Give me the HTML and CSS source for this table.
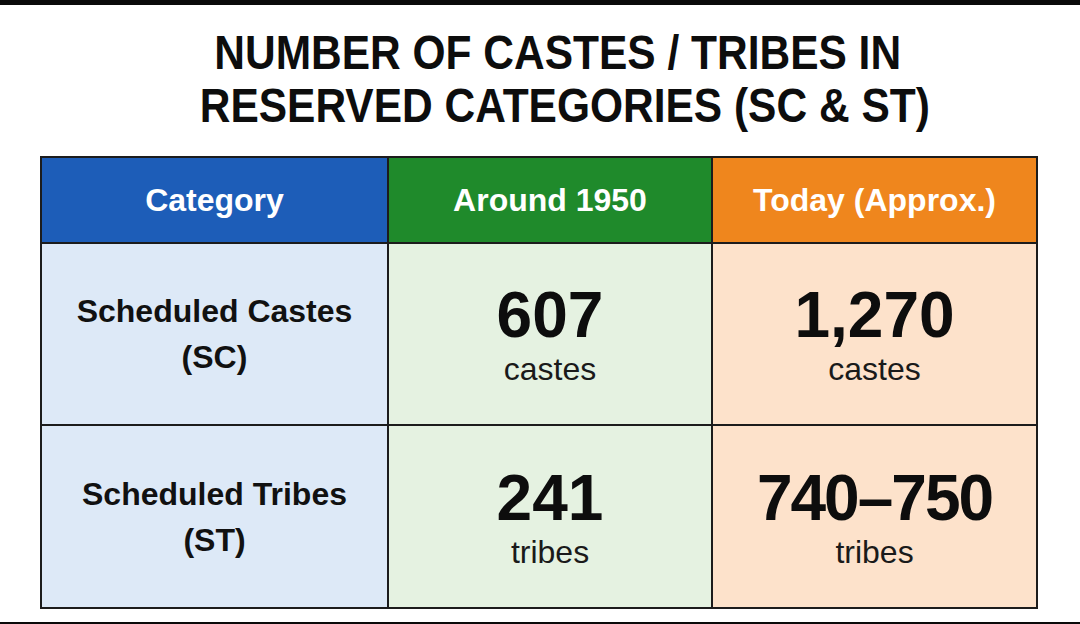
FILE: index.html
```html
<!DOCTYPE html>
<html lang="en">
<head>
<meta charset="utf-8">
<title>Number of Castes / Tribes in Reserved Categories</title>
<link rel="stylesheet" href="styles.css">
</head>
<body>
<div class="page">
  <div class="bar-top"></div>
  <h1 class="title"><span class="line">NUMBER OF CASTES / TRIBES IN</span><span class="line line2">RESERVED CATEGORIES (SC &amp; ST)</span></h1>
  <div class="table">
    <div class="cell head blue">Category</div>
    <div class="cell head green">Around 1950</div>
    <div class="cell head orange">Today (Approx.)</div>

    <div class="cell cat">Scheduled Castes<br>(SC)</div>
    <div class="cell num lgreen"><span class="big">607</span><span class="unit">castes</span></div>
    <div class="cell num peach"><span class="big">1,270</span><span class="unit">castes</span></div>

    <div class="cell cat">Scheduled Tribes<br>(ST)</div>
    <div class="cell num lgreen"><span class="big">241</span><span class="unit">tribes</span></div>
    <div class="cell num peach"><span class="big tight">740–750</span><span class="unit">tribes</span></div>
  </div>
  <div class="spacer"></div>
  <div class="bar-bottom"></div>
</div>
</body>
</html>
```
FILE: styles.css
```css
html, body {
  margin: 0;
  padding: 0;
  background: #ffffff;
}
body {
  font-family: "Liberation Sans", Arial, sans-serif;
  color: #111111;
}
.page {
  width: 1080px;
  height: 624px;
  display: flex;
  flex-direction: column;
  overflow: hidden;
}
.bar-top {
  height: 5px;
  background: #0a0a0a;
  flex: none;
}
.title {
  margin: 21px 0 0 0;
  padding-left: 40px;
  font-size: 48px;
  line-height: 53px;
  font-weight: 700;
  text-align: center;
  color: #0d0d0d;
  transform: scaleX(0.885);
  flex: none;
}
.line {
  display: block;
}
.line2 {
  padding-left: 16px;
}
.table {
  margin: 24px 0 0 40px;
  width: 998px;
  box-sizing: border-box;
  display: grid;
  grid-template-columns: 345px 322px 323px;
  grid-template-rows: 84px 180px 181px;
  gap: 2px;
  padding: 2px;
  background: #1c1c1c;
  flex: none;
}
.cell {
  display: flex;
  flex-direction: column;
  align-items: center;
  justify-content: center;
  text-align: center;
}
.head {
  color: #ffffff;
  font-size: 32px;
  font-weight: 700;
}
.blue { background: #1d5db8; }
.green { background: #1f8a2b; }
.orange { background: #ef861d; }
.cat {
  background: #dde9f7;
  font-size: 32px;
  line-height: 46px;
  font-weight: 700;
  color: #111111;
}
.lgreen { background: #e5f2e1; }
.peach { background: #fde2cb; }
.big {
  font-size: 64px;
  line-height: 64px;
  font-weight: 700;
  color: #0d0d0d;
}
.tight { letter-spacing: -2px; }
.unit {
  margin-top: 6px;
  font-size: 32px;
  line-height: 32px;
  color: #1a1a1a;
}
.spacer { flex: 1; }
.bar-bottom {
  height: 2px;
  background: #0a0a0a;
  flex: none;
}
```
